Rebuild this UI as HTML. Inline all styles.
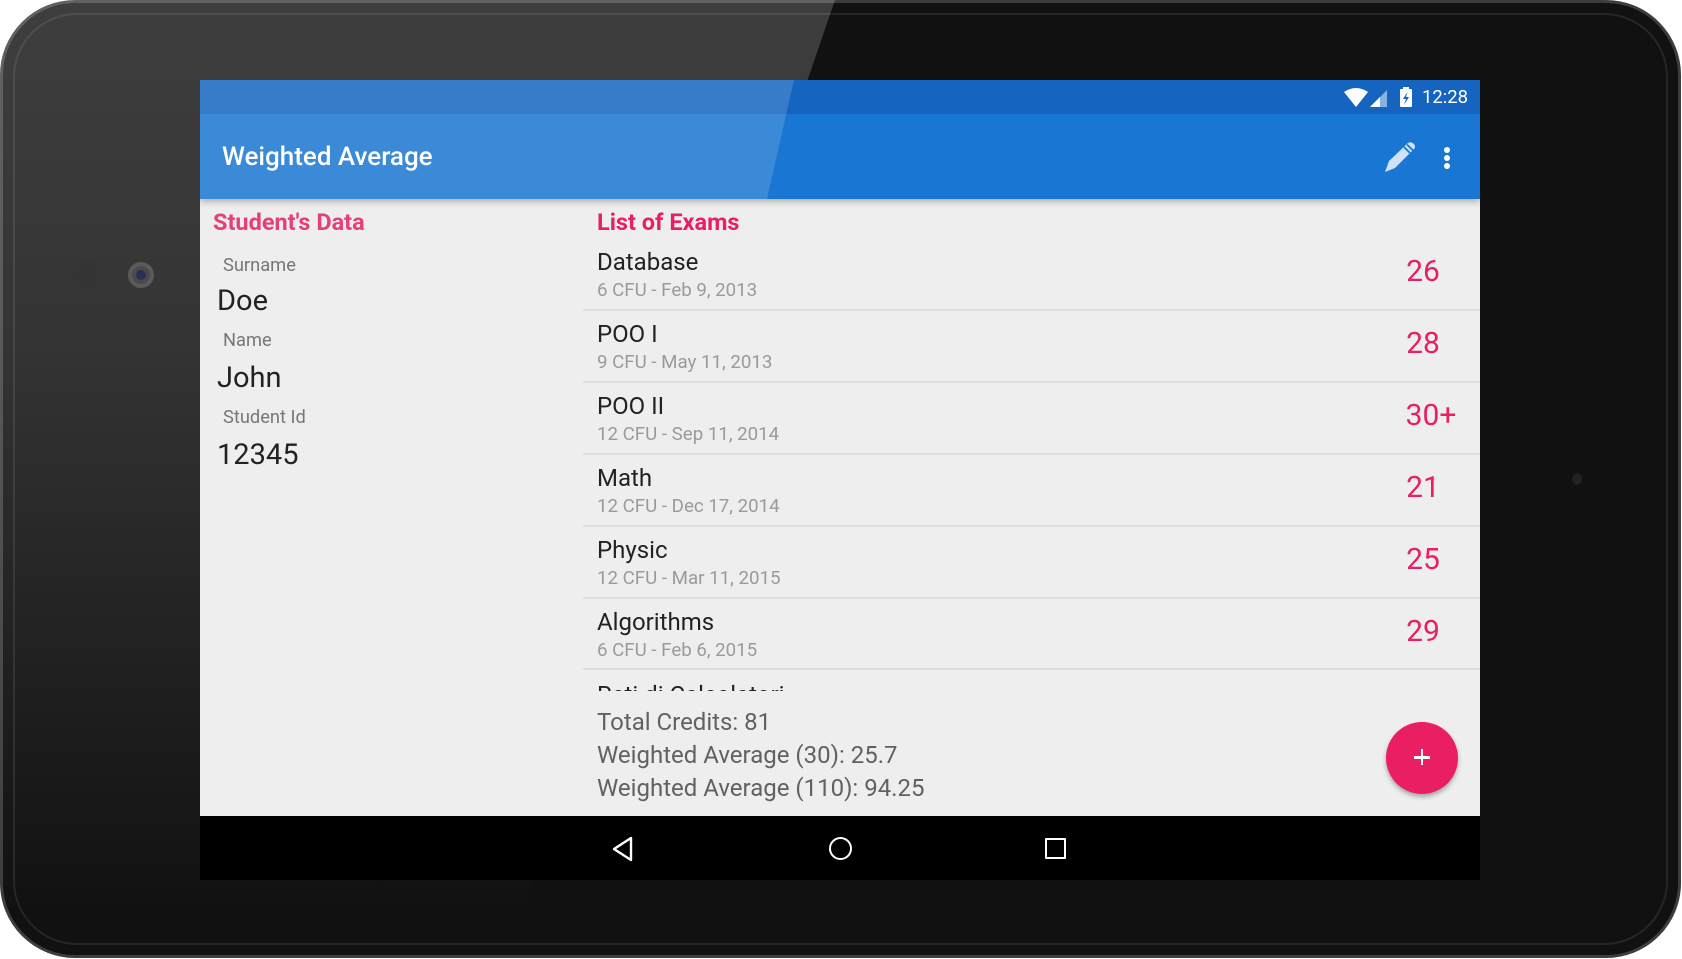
<!DOCTYPE html>
<html><head><meta charset="utf-8"><style>
*{margin:0;padding:0;box-sizing:border-box}
html,body{width:1682px;height:959px;background:#fff;overflow:hidden;font-family:"Roboto","Liberation Sans",sans-serif}
.tab{position:absolute;left:0;top:0;width:1681px;height:958px;border-radius:75px;background:#111;border:3px solid #3d3d3d;overflow:hidden}
.rim{position:absolute;left:10px;top:10px;right:10px;bottom:10px;border-radius:64px;border:2px solid #262626}
.glare{position:absolute;left:0;top:0;width:1682px;height:959px;clip-path:polygon(0 0,835px 0,506px 959px,0 959px);background:linear-gradient(180deg,rgba(255,255,255,.19),rgba(255,255,255,.15) 35%,rgba(255,255,255,.05) 75%,rgba(255,255,255,0) 95%)}
.scr{position:absolute;left:200px;top:80px;width:1280px;height:800px;background:#eee;overflow:hidden}
.sb{position:absolute;left:0;top:0;width:1280px;height:34px;background:#1565c0}
.tb{position:absolute;left:0;top:34px;width:1280px;height:85px;background:#1976d2;box-shadow:0 3px 6px rgba(0,0,0,.25);z-index:2}
.sg{position:absolute;left:0;top:0;width:1280px;height:119px;clip-path:polygon(0 0,594px 0,567px 119px,0 119px);background:rgba(255,255,255,.15);z-index:3}
.t{position:absolute;white-space:nowrap;line-height:1}
.nav{position:absolute;left:0;top:736px;width:1280px;height:64px;background:#000}
.div{position:absolute;left:383px;width:897px;height:2px;background:#dcdcdc}
.g{position:absolute;color:#e91e63;font-size:30px;line-height:1;text-align:center;width:100px;left:1173px}
.ti{left:397px;color:#222;font-size:24px}
.su{left:397px;color:#9a9a9a;font-size:18.7px}
</style></head><body>
<div class="tab"><div class="rim"></div></div>
<div class="glare"></div>
<div style="position:absolute;left:128px;top:262px;width:26px;height:26px;border-radius:50%;background:#4a4a4a;border:4px solid #5a5a5a"></div>
<div style="position:absolute;left:136px;top:270px;width:10px;height:10px;border-radius:50%;background:#2b2f55"></div>
<div style="position:absolute;left:72px;top:260px;width:30px;height:30px;border-radius:50%;background:#353535"></div>
<div style="position:absolute;left:1572px;top:473px;width:10px;height:12px;border-radius:50%;background:#222"></div>
<div class="scr">
 <div class="sb"></div>
 <div class="tb"></div>
 <div class="sg"></div>
 <svg style="position:absolute;left:1144px;top:7px;z-index:4" width="72" height="22" viewBox="0 0 72 22"><path d="M0 5 Q12 -3 24 5 L12 20Z" fill="#fff"/><path d="M26 20 L43 3 L43 20Z" fill="#fff" opacity=".5"/><path d="M26 20 L36 10 L36 20Z" fill="#fff"/><rect x="56" y="2" width="12" height="18" rx="1" fill="#fff"/><rect x="59" y="0" width="6" height="3" fill="#fff"/><path d="M63.5 5 L59 12 L62 12 L60 18 L65 10 L62 10Z" fill="#1565c0"/></svg>
 <div class="t" style="left:1222px;top:8px;color:#fff;font-size:18.5px;z-index:4">12:28</div>
 <div class="t" style="left:22px;top:64px;color:#fff;font-size:26px;font-weight:500;z-index:4">Weighted Average</div>
 <svg style="position:absolute;left:1182px;top:59px;z-index:4" width="36" height="36" viewBox="0 0 36 36"><path d="M3 33 L7 22 L26 4 Q29 2 32 5 Q34 8 32 10 L13 29Z" fill="#cfe3f8"/><path d="M22 8 L28 14 M25 5.5 L31 11.5" stroke="#1976d2" stroke-width="1.8"/></svg>
 <div style="position:absolute;left:1244px;top:67px;width:6px;height:6px;border-radius:50%;background:#fff;z-index:4;box-shadow:0 8px 0 #fff,0 16px 0 #fff"></div>

 <div class="t" style="left:13px;top:131px;color:#e63e77;font-size:23.5px;font-weight:bold">Student's Data</div>
 <div class="t" style="left:23px;top:177px;color:#777;font-size:18.3px">Surname</div>
 <div class="t" style="left:17px;top:207px;color:#222;font-size:29px">Doe</div>
 <div class="t" style="left:23px;top:252px;color:#777;font-size:18.3px">Name</div>
 <div class="t" style="left:17px;top:284px;color:#222;font-size:29px">John</div>
 <div class="t" style="left:23px;top:329px;color:#777;font-size:18.3px">Student Id</div>
 <div class="t" style="left:17px;top:361px;color:#222;font-size:29px">12345</div>

 <div class="t" style="left:397px;top:131px;color:#e91e63;font-size:23.5px;font-weight:bold">List of Exams</div>
 <div class="t ti" style="top:170px">Database</div>
 <div class="t su" style="top:201px">6 CFU - Feb 9, 2013</div>
 <div class="g" style="top:177px">26</div>
 <div class="div" style="top:229px"></div>
 <div class="t ti" style="top:242px">POO I</div>
 <div class="t su" style="top:273px">9 CFU - May 11, 2013</div>
 <div class="g" style="top:249px">28</div>
 <div class="div" style="top:301px"></div>
 <div class="t ti" style="top:314px">POO II</div>
 <div class="t su" style="top:345px">12 CFU - Sep 11, 2014</div>
 <div class="g" style="top:321px;left:1181px">30+</div>
 <div class="div" style="top:373px"></div>
 <div class="t ti" style="top:386px">Math</div>
 <div class="t su" style="top:417px">12 CFU - Dec 17, 2014</div>
 <div class="g" style="top:393px">21</div>
 <div class="div" style="top:445px"></div>
 <div class="t ti" style="top:458px">Physic</div>
 <div class="t su" style="top:489px">12 CFU - Mar 11, 2015</div>
 <div class="g" style="top:465px">25</div>
 <div class="div" style="top:517px"></div>
 <div class="t ti" style="top:530px">Algorithms</div>
 <div class="t su" style="top:561px">6 CFU - Feb 6, 2015</div>
 <div class="g" style="top:537px">29</div>
 <div class="div" style="top:588px"></div>
 <div style="position:absolute;left:397px;top:603px;width:400px;height:8px;overflow:hidden"><div class="t" style="left:0;top:0;color:#222;font-size:24px">Reti di Calcolatori</div></div>

 <div class="t" style="left:397px;top:630px;color:#616161;font-size:24px">Total Credits: 81</div>
 <div class="t" style="left:397px;top:663px;color:#616161;font-size:24px">Weighted Average (30): 25.7</div>
 <div class="t" style="left:397px;top:696px;color:#616161;font-size:24px">Weighted Average (110): 94.25</div>
 <div style="position:absolute;left:1186px;top:642px;width:72px;height:72px;border-radius:50%;background:#e91e63;box-shadow:0 3px 5px rgba(0,0,0,.3)"></div>
 <div style="position:absolute;left:1214px;top:676px;width:16px;height:2.5px;background:#fff"></div>
 <div style="position:absolute;left:1220.7px;top:669px;width:2.5px;height:16px;background:#fff"></div>

 <div class="nav">
  <svg style="position:absolute;left:410px;top:19px" width="28" height="28" viewBox="0 0 28 28"><path d="M21 3 L21 25 L4 14Z" fill="none" stroke="#fff" stroke-width="2.4" stroke-linejoin="round"/></svg>
  <div style="position:absolute;left:629px;top:21px;width:23px;height:23px;border-radius:50%;border:2.4px solid #fff"></div>
  <div style="position:absolute;left:845px;top:22px;width:21px;height:21px;border:2.4px solid #fff;border-radius:1px"></div>
 </div>
</div>
</body></html>
